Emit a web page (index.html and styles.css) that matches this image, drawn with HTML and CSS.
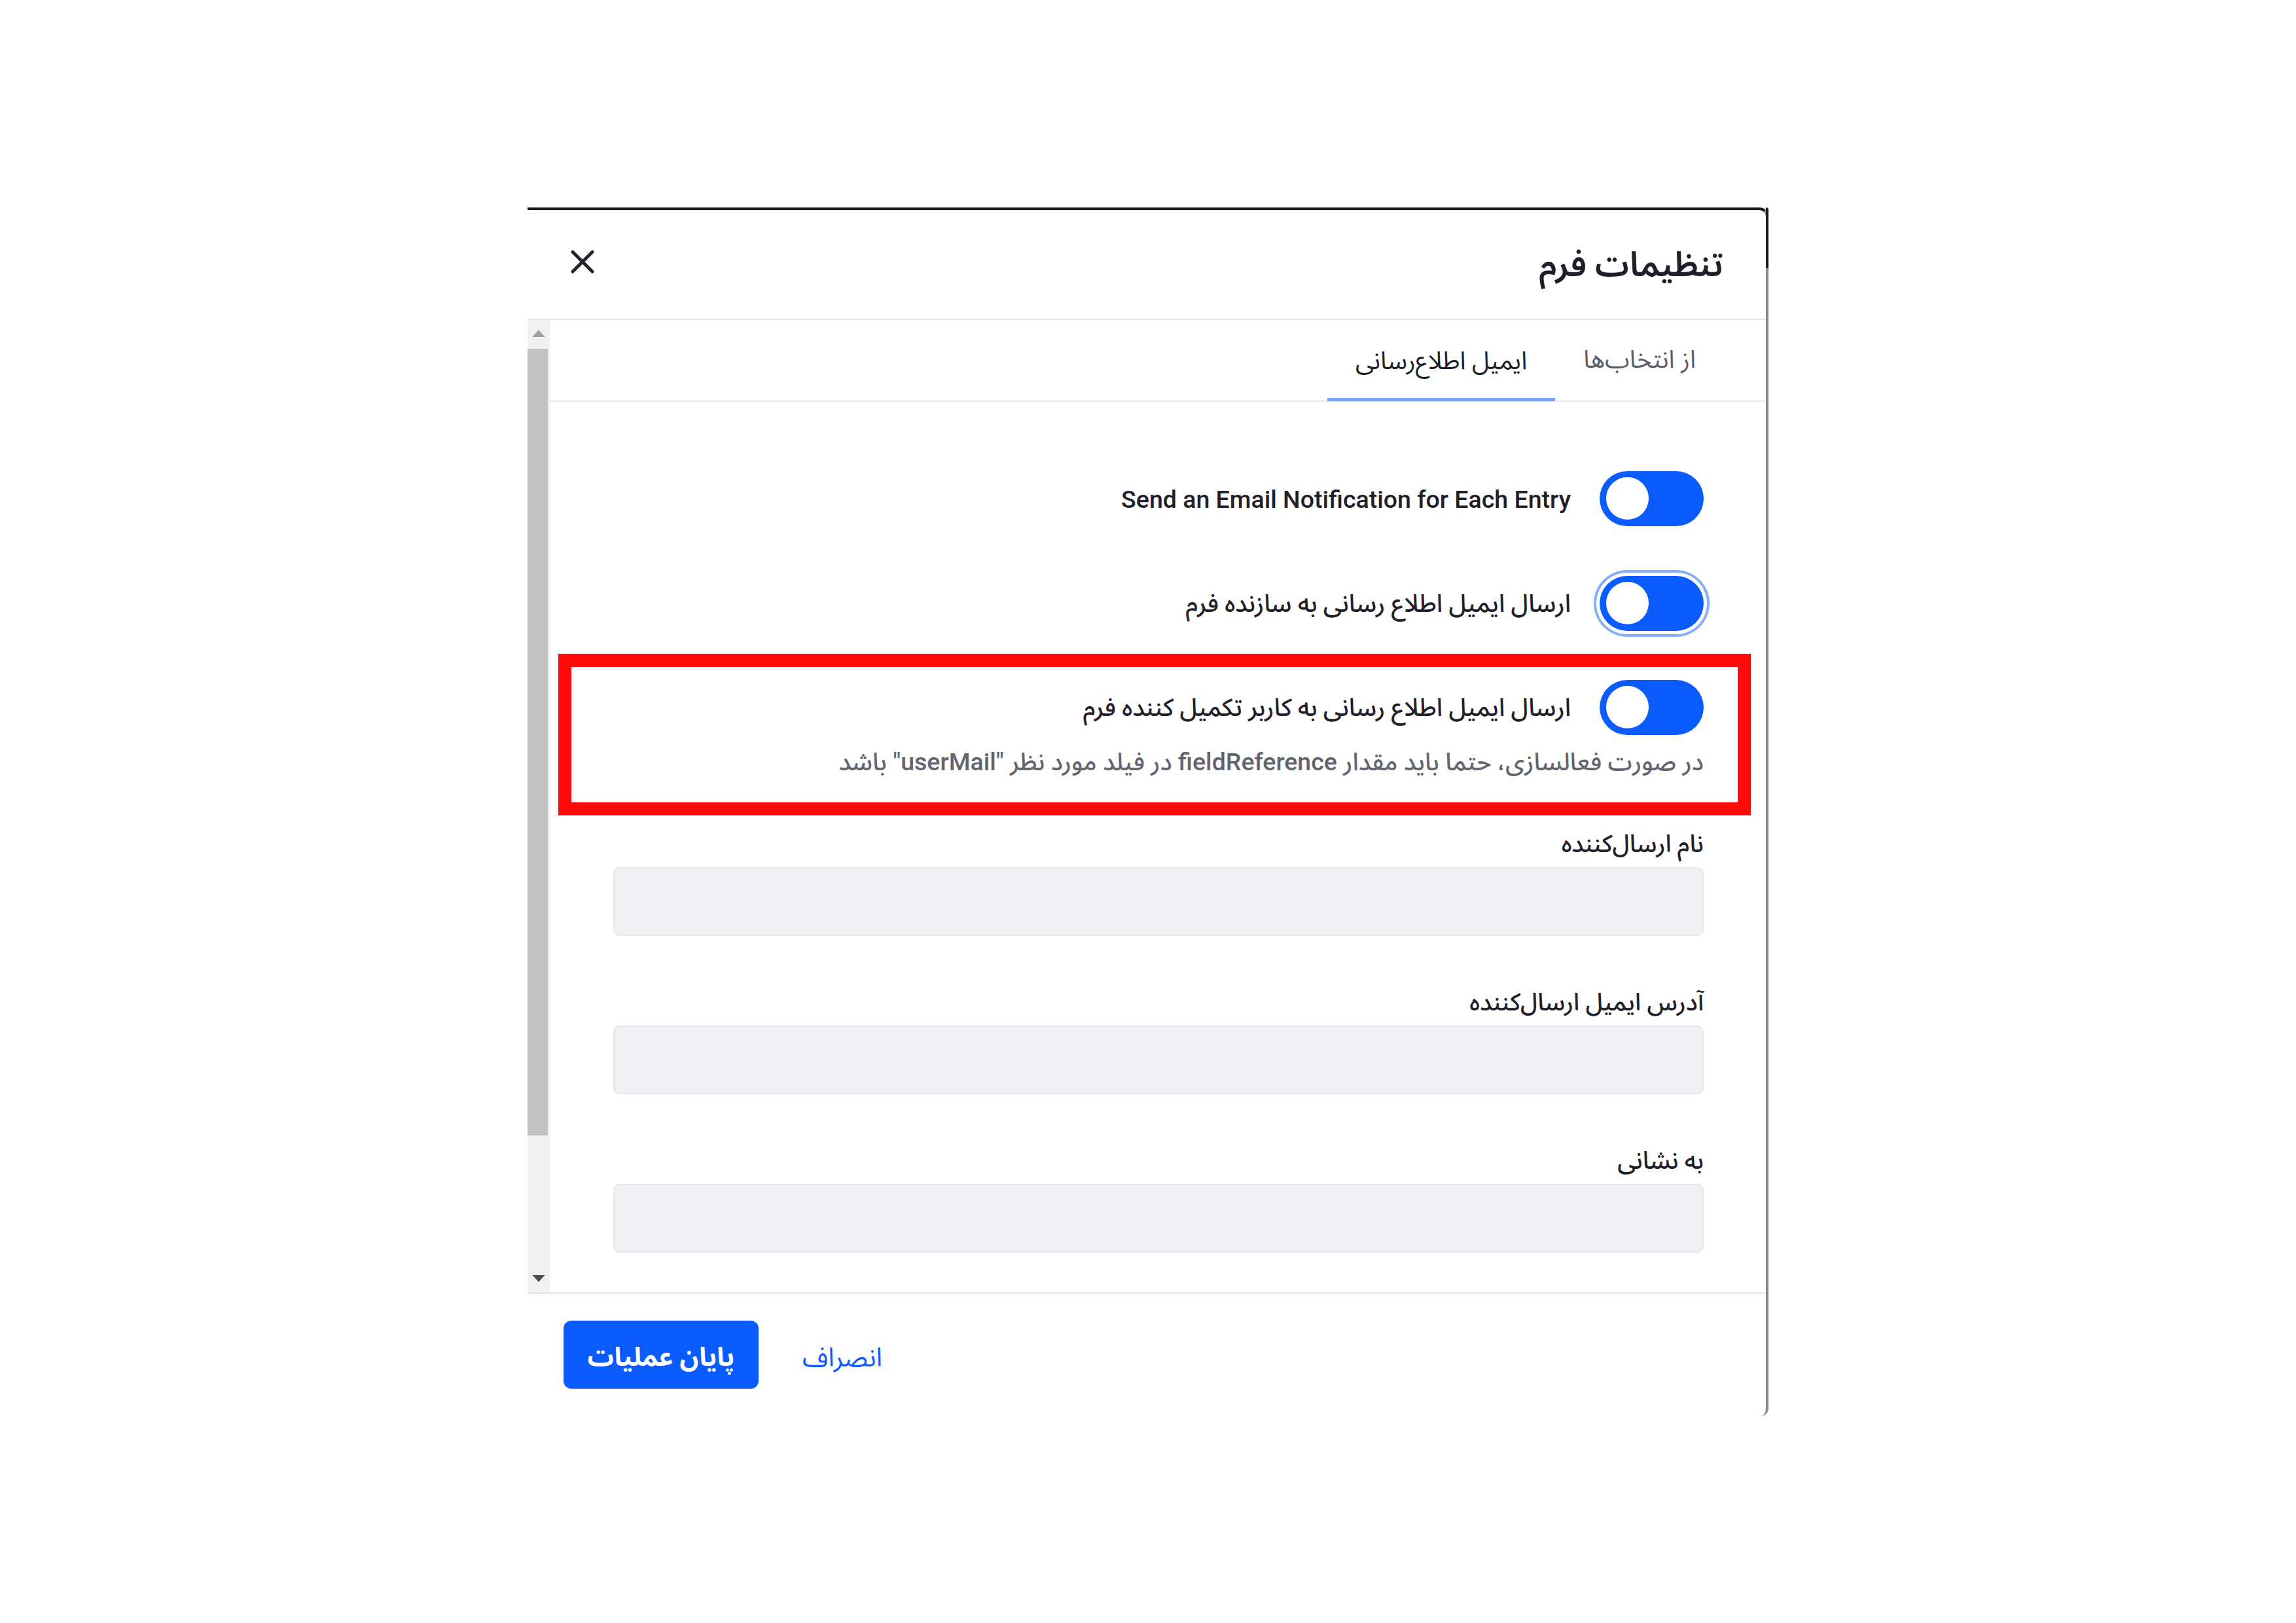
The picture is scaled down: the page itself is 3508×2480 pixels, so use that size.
FILE: index.html
```html
<!DOCTYPE html>
<html lang="fa" dir="rtl">
<head>
    <meta charset="utf-8">
    <title>تنظیمات فرم</title>
    <link rel="stylesheet" href="styles.css">
</head>
<body>
  <div class="modal">
    <div class="modal-header">
      <div class="modal-title">تنظیمات فرم</div>
      <button class="close-btn" aria-label="close">
        <svg width="36" height="36" viewBox="0 0 36 36">
          <path d="M3 3 L33 33 M33 3 L3 33" stroke="#20232e" stroke-width="5" stroke-linecap="round" fill="none"/>
        </svg>
      </button>
    </div>

    <div class="modal-body">
      <div class="scroll-content">
        <div class="tabs">
          <div class="tab">از انتخاب‌ها</div>
          <div class="tab active">ایمیل اطلاع‌رسانی</div>
        </div>

        <div class="panel">
          <div class="switch-row">
            <span class="switch"><span class="knob"></span></span>
            <span class="switch-label" dir="ltr">Send an Email Notification for Each Entry</span>
          </div>

          <div class="switch-row">
            <span class="switch focused"><span class="knob"></span></span>
            <span class="switch-label">ارسال ایمیل اطلاع رسانی به سازنده فرم</span>
          </div>

          <div class="highlight">
            <div class="switch-row">
              <span class="switch"><span class="knob"></span></span>
              <span class="switch-label">ارسال ایمیل اطلاع رسانی به کاربر تکمیل کننده فرم</span>
            </div>
            <div class="help-text">در صورت فعالسازی، حتما باید مقدار fieldReference در فیلد مورد نظر "userMail" باشد</div>
          </div>

          <div class="field">
            <label class="field-label">نام ارسال‌کننده</label>
            <div class="input"></div>
          </div>

          <div class="field">
            <label class="field-label">آدرس ایمیل ارسال‌کننده</label>
            <div class="input"></div>
          </div>

          <div class="field">
            <label class="field-label">به نشانی</label>
            <div class="input"></div>
          </div>
        </div>
      </div>

      <div class="scrollbar">
        <div class="sb-btn"><span class="arrow-up"></span></div>
        <div class="sb-track"><div class="sb-thumb"></div></div>
        <div class="sb-btn"><span class="arrow-down"></span></div>
      </div>
    </div>

    <div class="modal-footer">
      <button class="link-btn">انصراف</button>
      <button class="primary-btn">پایان عملیات</button>
    </div>
  </div>
</body>
</html>
```

FILE: styles.css
```css
html, body {
  margin: 0;
  padding: 0;
  height: 100%;
  background: #fff;
}

body {
  display: flex;
  align-items: center;
  justify-content: center;
  font-family: Roboto, "Noto Sans Arabic", "DejaVu Sans", sans-serif;
  color: #1f2029;
}

.modal {
  position: relative;
  box-sizing: border-box;
  width: 1896px;
  height: 1847px;
  display: flex;
  flex-direction: column;
  background: #fff;
  border-top: 4px solid #1c1c1f;
  border-right: 4px solid #8a8a8e;
  border-radius: 0 14px 12px 0;
}

/* dark top part of the window edge */
.modal::before {
  content: "";
  position: absolute;
  top: -4px;
  right: -4px;
  width: 4px;
  height: 92px;
  background: #1c1c1f;
  border-top-right-radius: 14px;
}

.modal-header {
  flex: none;
  height: 166px;
  display: flex;
  align-items: center;
  justify-content: space-between;
  padding: 0 65px 0 66px;
  border-bottom: 2px solid #e6e7ed;
}

.modal-title {
  font-size: 52px;
  font-weight: 600;
  color: #1e1f2a;
  margin-top: 4px;
}

.close-btn {
  border: 0;
  background: none;
  padding: 0;
  width: 36px;
  height: 36px;
  cursor: pointer;
  margin-top: -8px;
}

.modal-body {
  flex: 1;
  display: flex;
  min-height: 0;
}

.scroll-content {
  flex: 1;
  overflow: hidden;
}

.tabs {
  display: flex;
  height: 123px;
  padding-right: 64px;
  border-bottom: 2px solid #e6e7ed;
}

.tab {
  display: flex;
  align-items: center;
  padding: 0 43px;
  font-size: 38px;
  color: #5b5d6b;
  box-sizing: border-box;
}

.tab.active {
  color: #1d1e27;
  border-bottom: 5px solid #78a5f7;
  margin-bottom: -1px;
  padding-top: 8px;
}

.panel {
  padding: 106px 95px 0 97px;
}

.switch-row {
  display: flex;
  align-items: center;
  gap: 44px;
  margin-bottom: 76px;
}

.switch {
  flex: none;
  box-sizing: border-box;
  width: 159px;
  height: 84px;
  border-radius: 42px;
  background: #0b5cff;
  display: flex;
  align-items: center;
  justify-content: flex-end;
  padding: 0 10px;
}

.switch.focused {
  box-shadow: 0 0 0 5px #fff, 0 0 0 9px #86aefa;
}

.knob {
  width: 65px;
  height: 65px;
  border-radius: 50%;
  background: #fff;
}

.switch-label {
  font-size: 37.5px;
  font-weight: 500;
  color: #1f2029;
  margin-top: 3px;
}

.highlight {
  margin: -41px -72px 21px -84px;
  padding: 20px 52px 37px 64px;
  border: 20px solid #fe0a0a;
}

.highlight .switch-row {
  margin-bottom: 16px;
}

.help-text {
  font-size: 37.5px;
  line-height: 50px;
  color: #62646f;
  font-weight: 500;
}

.field {
  margin-bottom: 79px;
}

.field-label {
  display: block;
  font-size: 37px;
  line-height: 50px;
  font-weight: 500;
  color: #1f2029;
  margin-top: -2px;
  margin-bottom: 10px;
}

.input {
  box-sizing: border-box;
  height: 105px;
  background: #f0f1f5;
  border: 2px solid #e4e5ea;
  border-radius: 10px;
}

.scrollbar {
  flex: none;
  width: 34px;
  display: flex;
  flex-direction: column;
  background: #f1f1f1;
}

.sb-btn {
  flex: none;
  height: 42px;
  display: flex;
  align-items: center;
  justify-content: center;
}

.arrow-up {
  width: 0;
  height: 0;
  border-left: 10px solid transparent;
  border-right: 10px solid transparent;
  border-bottom: 11px solid #a3a3a3;
}

.arrow-down {
  width: 0;
  height: 0;
  border-left: 10px solid transparent;
  border-right: 10px solid transparent;
  border-top: 11px solid #505050;
}

.sb-track {
  flex: 1;
  display: flex;
  flex-direction: column;
  padding-top: 2px;
}

.sb-thumb {
  height: 1202px;
  margin-right: 3px;
  background: #c1c1c1;
}

.modal-footer {
  flex: none;
  height: 187px;
  display: flex;
  align-items: center;
  justify-content: flex-end;
  gap: 67px;
  padding-left: 55px;
  border-top: 2px solid #e6e7ed;
}

.primary-btn {
  box-sizing: border-box;
  width: 298px;
  height: 104px;
  border: 0;
  border-radius: 12px;
  background: #0b5cff;
  color: #fff;
  font-family: inherit;
  font-size: 40px;
  font-weight: 700;
  cursor: pointer;
  padding-top: 10px;
}

.link-btn {
  border: 0;
  background: none;
  padding: 10px 0 0;
  color: #0b5cff;
  font-family: inherit;
  font-size: 40px;
  cursor: pointer;
}
```
